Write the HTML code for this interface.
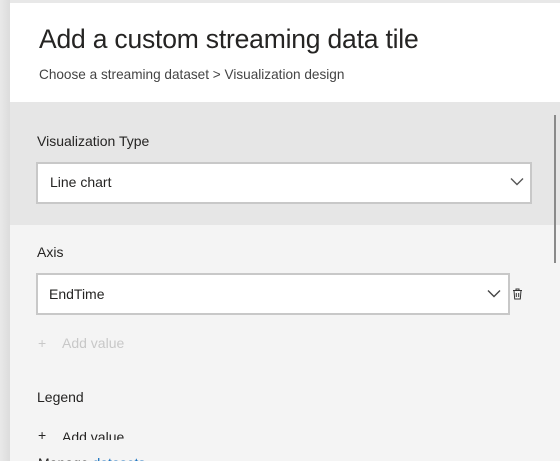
<!DOCTYPE html>
<html><head><style>
html,body{margin:0;width:560px;height:461px;overflow:hidden}
body{background:#ebebeb;font-family:"Segoe UI","Liberation Sans",sans-serif;position:relative}
.t{position:absolute;white-space:nowrap}
.dd{position:absolute;background:#fff;border:2px solid #c8c8c8;box-sizing:border-box}
</style></head><body>
<div style="position:absolute;left:0;top:0;width:560px;height:3px;background:#e8e8e8"></div>
<div style="position:absolute;left:0;top:0;width:10px;height:461px;background:linear-gradient(to right,#e9e9e9,#dcdcdc)"></div>
<div style="position:absolute;left:10px;top:3px;width:550px;height:99px;background:#fff"></div>
<div style="position:absolute;left:10px;top:102px;width:550px;height:123px;background:#e6e6e6"></div>
<div style="position:absolute;left:10px;top:225px;width:550px;height:236px;background:#f4f4f4"></div>
<div style="position:absolute;left:554px;top:115px;width:2px;height:148px;background:#8a8a8a"></div>
<div class="t" style="left:39px;top:24px;font-size:26.5px;color:#252423;letter-spacing:-0.2px">Add a custom streaming data tile</div>
<div class="t" style="left:39px;top:67px;font-size:13.6px;color:#444">Choose a streaming dataset &gt; Visualization design</div>
<div class="t" style="left:37px;top:133px;font-size:14px;color:#252423">Visualization Type</div>
<div class="dd" style="left:36px;top:162px;width:496px;height:42px"></div>
<div class="t" style="left:50px;top:174px;font-size:14px;color:#252423">Line chart</div>
<svg style="position:absolute;left:510px;top:177px" width="14" height="9" viewBox="0 0 14 9"><path d="M1 1.5l6 6 6-6" fill="none" stroke="#555" stroke-width="1.4"/></svg>
<div class="t" style="left:37px;top:244px;font-size:14px;color:#252423">Axis</div>
<div class="dd" style="left:36px;top:273px;width:474px;height:42px"></div>
<div class="t" style="left:49px;top:286px;font-size:14px;color:#252423">EndTime</div>
<svg style="position:absolute;left:487px;top:289px" width="14" height="9" viewBox="0 0 14 9"><path d="M1 1.5l6 6 6-6" fill="none" stroke="#444" stroke-width="1.4"/></svg>
<svg style="position:absolute;left:512px;top:288px" width="11" height="12" viewBox="0 0 11 12"><path d="M1 2.5h9M4 2.5V1h3v1.5M2 2.5l.7 8.5h5.6L9 2.5M4.3 5v4M6.7 5v4" fill="none" stroke="#333" stroke-width="1"/></svg>
<div class="t" style="left:38px;top:335px;font-size:14px;color:#c8c8c8">+</div>
<div class="t" style="left:62px;top:335px;font-size:14px;color:#c8c8c8">Add value</div>
<div class="t" style="left:37px;top:389px;font-size:14px;color:#252423">Legend</div>
<div style="position:absolute;left:0;top:420px;width:300px;height:20px;overflow:hidden">
<div class="t" style="left:38px;top:7px;font-size:14px;color:#252423">+</div>
<div class="t" style="left:62px;top:9px;font-size:14px;color:#252423">Add value</div></div>
<div class="t" style="left:38px;top:455px;font-size:14px;color:#252423">Manage <span style="color:#0f6cbd">datasets</span></div>
</body></html>
